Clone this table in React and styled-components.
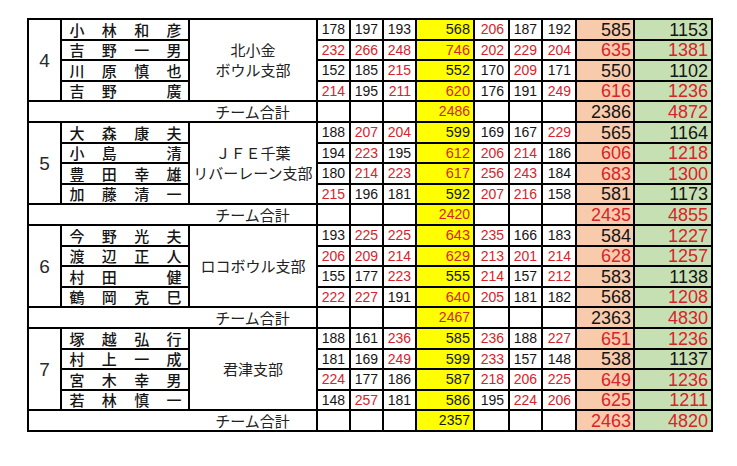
import React from "react";
import styled, { createGlobalStyle } from "styled-components";

const GlobalStyle = createGlobalStyle`
  body {
    margin: 0;
    background: #ffffff;
  }
`;

const RED = "#d8232a";
const INK = "#151515";

const Page = styled.div`
  padding: 18px 0 0 27px;
  width: 737px;
  height: 466px;
  box-sizing: border-box;
  background: #fff;
`;

const Sheet = styled.table`
  border-collapse: collapse;
  table-layout: fixed;
  width: 686px;
  font-family: "Liberation Sans", Arial, sans-serif;
  color: ${INK};
`;

const Row = styled.tr`
  height: ${(p) => p.$h}px;
`;

const Cell = styled.td`
  border: 2px solid #000;
  padding: 0;
  line-height: 1;
  white-space: nowrap;
`;

const NoCell = styled(Cell)`
  text-align: center;
  font-size: 19px;
  color: #2a2a2a;
`;

const NameCell = styled(Cell)`
  padding: 0 6px 0 7px;
`;

const NameChars = styled.div`
  display: flex;
  justify-content: space-between;
  font-family: "Noto Sans CJK JP", sans-serif;
  font-weight: 500;
  font-size: 15px;
  line-height: 16px;
`;

const Char = styled.span`
  width: 16px;
  text-align: center;
`;

const BranchCell = styled(Cell)`
  text-align: center;
  font-family: "Noto Sans CJK JP", sans-serif;
  font-size: 15px;
  line-height: 20px;
  color: #222;
`;

const Score = styled(Cell)`
  text-align: right;
  padding-right: ${(p) => p.$pad ?? 4}px;
  font-size: ${(p) => p.$size ?? 14}px;
  line-height: ${(p) => (p.$size ?? 14) >= 18 ? 16 : 15}px;
  background: ${(p) => p.$bg ?? "#fff"};
  color: ${(p) => (p.$hot ? RED : INK)};
`;

const Blank = styled(Cell)`
  border-right: none;
`;

const TotalLabel = styled(Cell)`
  border-left: none;
  text-align: center;
  font-family: "Noto Sans CJK JP", sans-serif;
  font-size: 15px;
  line-height: 16px;
  color: #222;
`;

const YELLOW = "#ffff00";
const ORANGE = "#f8cbad";
const GREEN = "#c6e0b4";

const groups = [
  {
    no: 4,
    branch: ["北小金", "ボウル支部"],
    players: [
      ["小林和彦", [178, 197, 193, 206, 187, 192]],
      ["吉野一男", [232, 266, 248, 202, 229, 204]],
      ["川原慎也", [152, 185, 215, 170, 209, 171]],
      ["吉野　廣", [214, 195, 211, 176, 191, 249]],
    ],
  },
  {
    no: 5,
    branch: ["ＪＦＥ千葉", "リバーレーン支部"],
    players: [
      ["大森康夫", [188, 207, 204, 169, 167, 229]],
      ["小島　清", [194, 223, 195, 206, 214, 186]],
      ["豊田幸雄", [180, 214, 223, 256, 243, 184]],
      ["加藤清一", [215, 196, 181, 207, 216, 158]],
    ],
  },
  {
    no: 6,
    branch: ["ロコボウル支部"],
    players: [
      ["今野光夫", [193, 225, 225, 235, 166, 183]],
      ["渡辺正人", [206, 209, 214, 213, 201, 214]],
      ["村田　健", [155, 177, 223, 214, 157, 212]],
      ["鶴岡克巳", [222, 227, 191, 205, 181, 182]],
    ],
  },
  {
    no: 7,
    branch: ["君津支部"],
    players: [
      ["塚越弘行", [188, 161, 236, 236, 188, 227]],
      ["村上一成", [181, 169, 249, 233, 157, 148]],
      ["宮木幸男", [224, 177, 186, 218, 206, 225]],
      ["若林慎一", [148, 257, 181, 195, 224, 206]],
    ],
  },
];

const widths = [33, 128, 128, 33, 33, 33, 58, 35, 33, 34, 58, 78];
const rowHeights = [21, 20, 21, 20];

const sum = (a) => a.reduce((x, y) => x + y, 0);

const Group = ({ group }) => {
  const series = group.players.map(([, g]) => {
    const a = sum(g.slice(0, 3));
    const b = sum(g.slice(3));
    return [a, b, a + b];
  });
  const teamA = sum(series.map((s) => s[0]));
  const teamB = sum(series.map((s) => s[1]));

  return (
    <>
      {group.players.map(([name, g], i) => (
        <Row key={name} $h={rowHeights[i]}>
          {i === 0 && <NoCell rowSpan={4}>{group.no}</NoCell>}
          <NameCell>
            <NameChars>
              {[...name].map((c, k) => (
                <Char key={k}>{c === "　" ? "" : c}</Char>
              ))}
            </NameChars>
          </NameCell>
          {i === 0 && (
            <BranchCell rowSpan={4}>
              {group.branch.map((b) => (
                <div key={b}>{b}</div>
              ))}
            </BranchCell>
          )}
          {g.slice(0, 3).map((v, k) => (
            <Score key={k} $hot={v >= 200}>{v}</Score>
          ))}
          <Score $bg={YELLOW} $pad={3} $size={14.5} $hot={series[i][0] >= 600}>
            {series[i][0]}
          </Score>
          {g.slice(3).map((v, k) => (
            <Score key={k} $hot={v >= 200}>{v}</Score>
          ))}
          <Score $bg={ORANGE} $pad={2} $size={18} $hot={series[i][1] >= 600}>
            {series[i][1]}
          </Score>
          <Score $bg={GREEN} $pad={3} $size={18} $hot={series[i][2] >= 1200}>
            {series[i][2]}
          </Score>
        </Row>
      ))}
      <Row $h={21}>
        <Blank colSpan={2} />
        <TotalLabel>チーム合計</TotalLabel>
        <Score />
        <Score />
        <Score />
        <Score $bg={YELLOW} $pad={3} $hot={teamA >= 2400}>
          {teamA}
        </Score>
        <Score />
        <Score />
        <Score />
        <Score $bg={ORANGE} $pad={2} $size={18} $hot={teamB >= 2400}>
          {teamB}
        </Score>
        <Score $bg={GREEN} $pad={3} $size={18} $hot={teamA + teamB >= 4800}>
          {teamA + teamB}
        </Score>
      </Row>
    </>
  );
};

export default function App() {
  return (
    <Page>
      <GlobalStyle />
      <Sheet>
        <colgroup>
          {widths.map((w, i) => (
            <col key={i} style={{ width: w }} />
          ))}
        </colgroup>
        <tbody>
          {groups.map((g) => (
            <Group key={g.no} group={g} />
          ))}
        </tbody>
      </Sheet>
    </Page>
  );
}
